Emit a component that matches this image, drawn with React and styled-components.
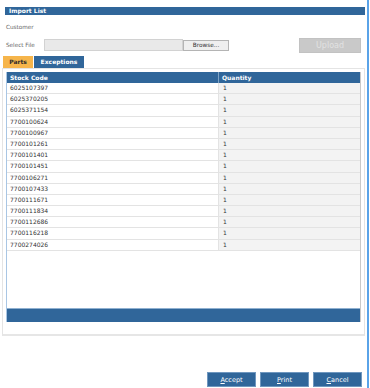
import React from "react";
import styled, { createGlobalStyle } from "styled-components";

const GlobalStyle = createGlobalStyle`
  html, body {
    margin: 0;
    padding: 0;
    background: #ffffff;
    overflow: hidden;
  }
  body {
    font-family: "DejaVu Sans", Verdana, sans-serif;
  }
`;

const BLUE = "#30669a";

const Frame = styled.div`
  box-sizing: border-box;
  width: 369px;
  height: 388px;
  border-right: 2px solid #5aa3e8;
  display: flex;
  flex-direction: column;
`;

const TitleBar = styled.div`
  margin: 7px 2px 0 5px;
  height: 8px;
  line-height: 8px;
  padding-left: 4px;
  background: ${BLUE};
  color: #ffffff;
  font-size: 6px;
  font-weight: bold;
  white-space: nowrap;
`;

const FieldRow = styled.div`
  display: flex;
  align-items: center;
  margin: ${(p) => p.$top}px 6px 0 6px;
  height: ${(p) => p.$height}px;
`;

const Label = styled.span`
  width: 38px;
  color: #666666;
  font-size: 5.7px;
  white-space: nowrap;
`;

const FileInput = styled.div`
  box-sizing: border-box;
  width: 139px;
  height: 12px;
  background: #e9e9e9;
  border: 1px solid #d2d2d2;
`;

const BrowseButton = styled.button`
  box-sizing: border-box;
  width: 46px;
  height: 11px;
  padding: 0;
  background: #efefef;
  border: 1px solid #b4b4b4;
  color: #333333;
  font-family: inherit;
  font-size: 5.8px;
  line-height: 9px;
`;

const UploadButton = styled.button`
  box-sizing: border-box;
  margin-left: auto;
  width: 62px;
  height: 15px;
  padding: 0;
  background: #c9c9c9;
  border: 1px solid #c2c2c2;
  color: #e2e2e2;
  font-family: inherit;
  font-size: 8px;
`;

const TabBar = styled.div`
  display: flex;
  gap: 1px;
  margin: 3px 0 0 3px;
  height: 12px;
`;

const Tab = styled.div`
  width: ${(p) => p.$width}px;
  height: 12px;
  line-height: 12px;
  text-align: center;
  background: ${(p) => (p.$active ? "#f6b54b" : BLUE)};
  color: ${(p) => (p.$active ? "#2b2b2b" : "#ffffff")};
  font-size: 6px;
  font-weight: bold;
`;

const Panel = styled.div`
  box-sizing: border-box;
  margin: 0 2px 0 2px;
  height: 268px;
  padding: 3px 3px 12px 3px;
  border: 1px solid #e4e4e4;
  border-bottom: 2px solid #e6e6e6;
  display: flex;
`;

const Grid = styled.div`
  flex: 1;
  display: flex;
  flex-direction: column;
  border-left: 1px solid #a9c6e4;
  border-right: 1px solid #c9c9c9;
`;

const HeaderRow = styled.div`
  display: grid;
  grid-template-columns: 211px 1fr;
  height: 11px;
  background: ${BLUE};
`;

const HeaderCell = styled.div`
  padding-left: 3px;
  line-height: 11px;
  color: #ffffff;
  font-size: 6px;
  font-weight: bold;
  border-left: ${(p) => (p.$divider ? "1px solid #7ea3c6" : "none")};
`;

const Body = styled.div`
  flex: 1;
  background: #ffffff;
`;

const Row = styled.div`
  display: grid;
  grid-template-columns: 211px 1fr;
  height: 11.2px;
`;

const Cell = styled.div`
  box-sizing: border-box;
  padding-left: ${(p) => (p.$qty ? 4 : 3)}px;
  line-height: 10.2px;
  font-size: 6px;
  color: #333333;
  border-bottom: 1px solid #e3e3e3;
  background: ${(p) => (p.$qty ? "#f3f3f3" : "#ffffff")};
  border-left: ${(p) => (p.$qty ? "1px solid #e3e3e3" : "none")};
`;

const Footer = styled.div`
  height: 13px;
  background: ${BLUE};
  border-top: 1px solid #8fb0d0;
`;

const ButtonBar = styled.div`
  display: flex;
  justify-content: flex-end;
  gap: 4px;
  margin: auto 5px 1px 0;
`;

const ActionButton = styled.button`
  box-sizing: border-box;
  width: 49px;
  height: 15px;
  padding: 0;
  background: ${BLUE};
  border: 1px solid #6f97bf;
  color: #ffffff;
  font-family: inherit;
  font-size: 6.5px;
  u {
    text-decoration: underline;
  }
`;

const parts = [
  "6025107397",
  "6025370205",
  "6025371154",
  "7700100624",
  "7700100967",
  "7700101261",
  "7700101401",
  "7700101451",
  "7700106271",
  "7700107433",
  "7700111671",
  "7700111834",
  "7700112686",
  "7700116218",
  "7700274026",
];

const App = () => {
  return (
    <>
      <GlobalStyle />
      <Frame>
        <TitleBar>Import List</TitleBar>
        <FieldRow $top={7} $height={10}>
          <Label>Customer</Label>
        </FieldRow>
        <FieldRow $top={5} $height={16}>
          <Label>Select File</Label>
          <FileInput />
          <BrowseButton>Browse...</BrowseButton>
          <UploadButton disabled>Upload</UploadButton>
        </FieldRow>
        <TabBar>
          <Tab $active $width={30}>Parts</Tab>
          <Tab $width={50}>Exceptions</Tab>
        </TabBar>
        <Panel>
          <Grid>
            <HeaderRow>
              <HeaderCell>Stock Code</HeaderCell>
              <HeaderCell $divider>Quantity</HeaderCell>
            </HeaderRow>
            <Body>
              {parts.map((code) => (
                <Row key={code}>
                  <Cell>{code}</Cell>
                  <Cell $qty>1</Cell>
                </Row>
              ))}
            </Body>
            <Footer />
          </Grid>
        </Panel>
        <ButtonBar>
          <ActionButton>
            <u>A</u>ccept
          </ActionButton>
          <ActionButton>
            <u>P</u>rint
          </ActionButton>
          <ActionButton>
            <u>C</u>ancel
          </ActionButton>
        </ButtonBar>
      </Frame>
    </>
  );
};

export default App;
